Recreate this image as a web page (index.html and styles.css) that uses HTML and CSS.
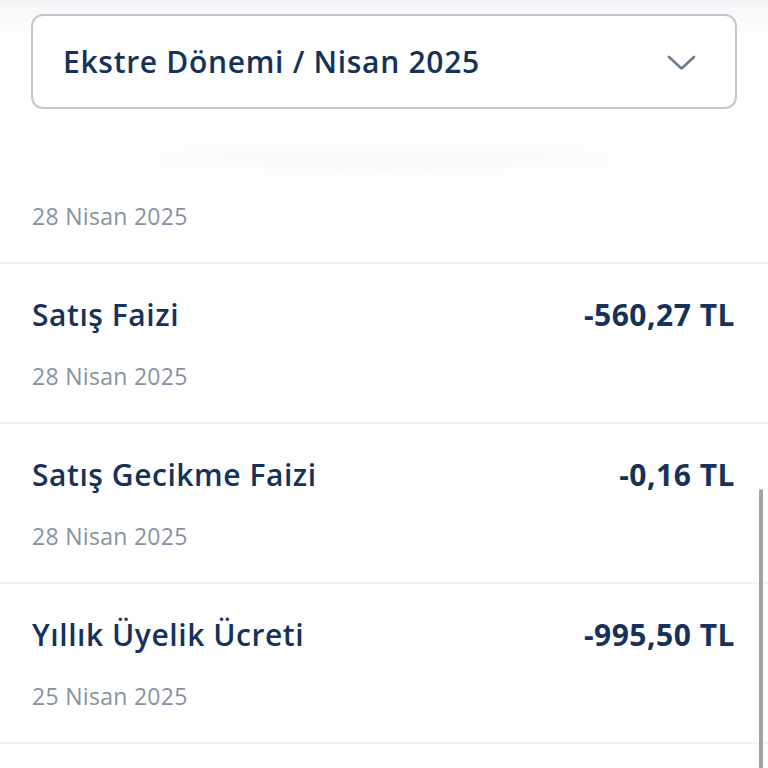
FILE: index.html
```html
<!DOCTYPE html>
<html lang="tr">
<head>
    <meta charset="UTF-8">
    <meta name="viewport" content="width=device-width, initial-scale=1.0">
    <title>Ekstre Detayı</title>
    <link rel="stylesheet" href="styles.css">
</head>
<body>
    <div class="header">
        <div class="period-select">
            <span class="period-label">Ekstre Dönemi / Nisan 2025</span>
            <svg class="chevron" width="29" height="17" viewBox="0 0 29 17">
                <path d="M2 3 L14.5 14.5 L27 3" fill="none" stroke="#6e7d92" stroke-width="2.6" stroke-linecap="round" stroke-linejoin="round"/>
            </svg>
        </div>
    </div>
    <div class="fade-shadow"></div>

    <div class="list">
        <div class="row row-partial">
            <div class="row-date">28 Nisan 2025</div>
        </div>
        <div class="row">
            <div class="row-top">
                <span class="row-title">Satış Faizi</span>
                <span class="row-amount">-560,27 TL</span>
            </div>
            <div class="row-date">28 Nisan 2025</div>
        </div>
        <div class="row">
            <div class="row-top">
                <span class="row-title">Satış Gecikme Faizi</span>
                <span class="row-amount">-0,16 TL</span>
            </div>
            <div class="row-date">28 Nisan 2025</div>
        </div>
        <div class="row">
            <div class="row-top">
                <span class="row-title">Yıllık Üyelik Ücreti</span>
                <span class="row-amount">-995,50 TL</span>
            </div>
            <div class="row-date">25 Nisan 2025</div>
        </div>
    </div>

    <div class="scrollbar"></div>
</body>
</html>
```

FILE: styles.css
```css
body {
    margin: 0;
    font-family: "Open Sans", "Noto Sans", sans-serif;
    background-color: #fff;
    color: #16325a;
    overflow: hidden;
}
.header {
    padding: 14px 31px 0 31px;
    background: linear-gradient(#f1f2f4 0, #f7f8f9 10px, #fff 40px);
}
.period-select {
    height: 91px;
    border: 2px solid #c4c8ce;
    border-radius: 12px;
    background-color: #fff;
    display: flex;
    align-items: center;
    justify-content: space-between;
    padding: 0 39px 0 30px;
}
.period-label {
    font-size: 30px;
    font-weight: 600;
    color: #16325a;
    letter-spacing: 0.7px;
}
.chevron {
    margin-top: 1px;
}
.fade-shadow {
    height: 14px;
    margin: 42px 140px 0 140px;
    background: #f2f3f4;
    border-radius: 50%;
    filter: blur(10px);
}
.list {
    margin-top: 36px;
}
.row {
    padding: 30px 33px 31px 32px;
    border-bottom: 2px solid #eff1f3;
}
.row-partial {
    padding-top: 0;
    padding-bottom: 31px;
}
.row-top {
    display: flex;
    justify-content: space-between;
    align-items: center;
    height: 40px;
    margin-bottom: 27px;
}
.row-title {
    font-size: 30px;
    font-weight: 600;
    color: #16325a;
    letter-spacing: 0.55px;
}
.row-amount {
    font-size: 30px;
    font-weight: 700;
    color: #16325a;
    letter-spacing: 0.5px;
}
.row-date {
    font-size: 23px;
    line-height: 30px;
    color: #8592a2;
    letter-spacing: 0.3px;
}
.scrollbar {
    position: absolute;
    right: 5px;
    top: 489px;
    width: 4px;
    height: 290px;
    border-radius: 2px;
    background-color: #a3a3a3;
}
```
